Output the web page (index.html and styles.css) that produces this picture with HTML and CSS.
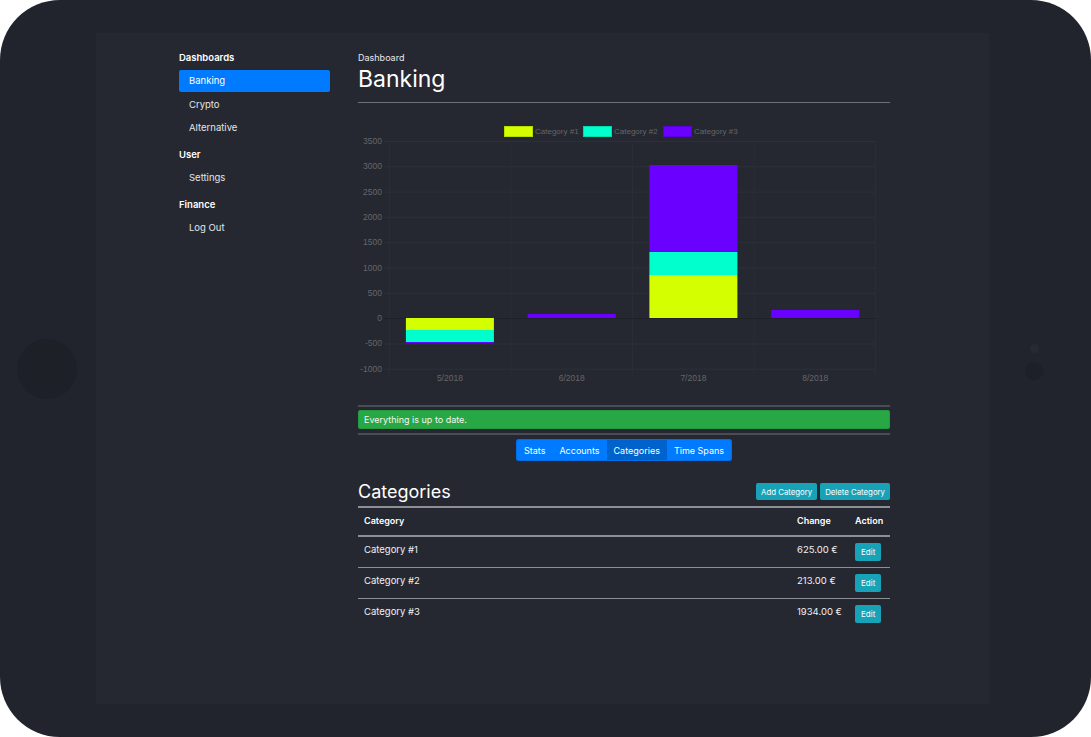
FILE: index.html
```html
<!DOCTYPE html>
<html>
<head>
<meta charset="utf-8">
<link rel="stylesheet" href="styles.css">
</head>
<body>
<div class="device">
  <div class="side-left"><div class="home-btn"></div></div>
  <div class="screen">
    <nav class="sidebar">
      <h6 class="nav-head first">Dashboards</h6>
      <a class="nav-item active">Banking</a>
      <a class="nav-item">Crypto</a>
      <a class="nav-item">Alternative</a>
      <h6 class="nav-head">User</h6>
      <a class="nav-item">Settings</a>
      <h6 class="nav-head">Finance</h6>
      <a class="nav-item">Log Out</a>
    </nav>
    <main class="main">
      <div class="crumb">Dashboard</div>
      <h1 class="title">Banking</h1>
      <div class="rule"></div>
      <svg class="chart" width="532" height="274" viewBox="0 0 532 274" font-family="Liberation Sans, Arial, sans-serif" font-size="8.5">
        <g fill="#d4ff00" stroke="#b8dc00" stroke-width="1"><rect x="146.5" y="8.5" width="28" height="10"/></g>
        <g fill="#00ffcc" stroke="#00d9ad"><rect x="225.5" y="8.5" width="28" height="10"/></g>
        <g fill="#6a00ff" stroke="#5a00dd"><rect x="305.5" y="8.5" width="28" height="10"/></g>
        <g fill="#666" font-size="8"><text x="177" y="16">Category #1</text><text x="256" y="16">Category #2</text><text x="336" y="16">Category #3</text></g>
        <g stroke="#2c3038" stroke-width="1">
          <line x1="26" y1="23.5" x2="518" y2="23.5"/>
          <line x1="26" y1="48.8" x2="518" y2="48.8"/>
          <line x1="26" y1="74.1" x2="518" y2="74.1"/>
          <line x1="26" y1="99.4" x2="518" y2="99.4"/>
          <line x1="26" y1="124.7" x2="518" y2="124.7"/>
          <line x1="26" y1="150" x2="518" y2="150"/>
          <line x1="26" y1="175.3" x2="518" y2="175.3"/>
          <line x1="26" y1="226" x2="518" y2="226"/>
          <line x1="26" y1="251.2" x2="518" y2="251.2"/>
        </g>
        <g stroke="#2a2d35" stroke-width="1">
          <line x1="31.5" y1="23" x2="31.5" y2="258"/>
          <line x1="153" y1="23" x2="153" y2="258"/>
          <line x1="274.5" y1="23" x2="274.5" y2="258"/>
          <line x1="396" y1="23" x2="396" y2="258"/>
          <line x1="517.5" y1="23" x2="517.5" y2="258"/>
        </g>
        <line x1="26" y1="200.5" x2="518" y2="200.5" stroke="#1d2027" stroke-width="1"/>
        <g fill="#666" text-anchor="end">
          <text x="24" y="26">3500</text>
          <text x="24" y="51.3">3000</text>
          <text x="24" y="76.6">2500</text>
          <text x="24" y="101.9">2000</text>
          <text x="24" y="127.2">1500</text>
          <text x="24" y="152.5">1000</text>
          <text x="24" y="177.8">500</text>
          <text x="24" y="203">0</text>
          <text x="24" y="228.4">-500</text>
          <text x="24" y="253.7">-1000</text>
        </g>
        <g>
          <rect x="47.9" y="200" width="88" height="12" fill="#d4ff00"/>
          <rect x="47.9" y="212" width="88" height="12" fill="#00ffcc"/>
          <rect x="47.9" y="224" width="88" height="1.2" fill="#6a00ff"/>
          <rect x="169.7" y="196" width="88" height="4" fill="#6a00ff"/>
          <rect x="291.4" y="157" width="88" height="43" fill="#d4ff00"/>
          <rect x="291.4" y="134" width="88" height="23" fill="#00ffcc"/>
          <rect x="291.4" y="47" width="88" height="87" fill="#6a00ff"/>
          <rect x="413.2" y="192" width="88" height="8" fill="#6a00ff"/>
        </g>
        <g fill="#666" text-anchor="middle">
          <text x="91.9" y="263">5/2018</text>
          <text x="213.7" y="263">6/2018</text>
          <text x="335.4" y="263">7/2018</text>
          <text x="457.2" y="263">8/2018</text>
        </g>
      </svg>
      <div class="sep"></div>
      <div class="alert">Everything is up to date.</div>
      <div class="sep"></div>
      <div class="tabs">
        <div class="btn-group">
          <button class="tab">Stats</button>
          <button class="tab">Accounts</button>
          <button class="tab active">Categories</button>
          <button class="tab">Time Spans</button>
        </div>
      </div>
      <div class="section-head">
        <h2 class="section-title">Categories</h2>
        <div class="actions">
          <button class="btn-info">Add Category</button>
          <button class="btn-info">Delete Category</button>
        </div>
      </div>
      <table class="table">
        <thead>
          <tr><th>Category</th><th class="col-change">Change</th><th class="col-action">Action</th></tr>
        </thead>
        <tbody>
          <tr><td>Category #1</td><td>625.00 €</td><td><button class="btn-edit">Edit</button></td></tr>
          <tr><td>Category #2</td><td>213.00 €</td><td><button class="btn-edit">Edit</button></td></tr>
          <tr><td>Category #3</td><td>1934.00 €</td><td><button class="btn-edit">Edit</button></td></tr>
        </tbody>
      </table>
    </main>
  </div>
  <div class="side-right">
    <div class="cam-dot"></div>
    <div class="cam-lens"></div>
  </div>
</div>
</body>
</html>
```

FILE: styles.css
```css
* { box-sizing: border-box; }
html, body { margin: 0; padding: 0; background: #ffffff; }
body { font-family: "Inter", "Roboto", sans-serif; color: #ffffff; }

.device {
  width: 1091px;
  height: 737px;
  background: #21242d;
  border-radius: 60px;
  display: flex;
  align-items: center;
}

.side-left {
  width: 96px;
  display: flex;
  justify-content: center;
  padding-right: 2px;
}
.home-btn {
  width: 60px;
  height: 60px;
  border-radius: 50%;
  background: #1d2027;
}

.side-right {
  flex: 1;
  display: flex;
  flex-direction: column;
  align-items: flex-start;
  padding-left: 36px;
  padding-bottom: 13px;
}
.cam-dot {
  width: 9px;
  height: 9px;
  border-radius: 50%;
  background: #272a32;
  margin-left: 4.5px;
}
.cam-lens {
  width: 18px;
  height: 18px;
  border-radius: 50%;
  background: #1d2027;
  margin-top: 9.5px;
}

.screen {
  width: 893px;
  height: 671px;
  background: #252831;
  display: flex;
  padding-left: 83px;
}

.sidebar {
  width: 151px;
  padding-top: 18px;
  display: flex;
  flex-direction: column;
}
.nav-head {
  margin: 7.5px 0 5px 0;
  font-size: 9.5px;
  line-height: 14px;
  font-weight: 600;
  color: #ffffff;
}
.nav-head.first { margin-top: 0; }
.nav-item {
  display: block;
  height: 22px;
  line-height: 22px;
  padding-left: 10px;
  font-size: 9.5px;
  color: #e4e5e8;
  border-radius: 2px;
  margin-bottom: 1.5px;
}
.nav-item.active {
  background: #007bff;
  color: #ffffff;
}

.main {
  width: 532px;
  margin-left: 28px;
  padding-top: 19px;
}
.crumb {
  font-size: 9px;
  line-height: 12px;
  color: #e8e9eb;
}
.title {
  margin: 1px 0 0 0;
  font-size: 23px;
  line-height: 28px;
  font-weight: 400;
  color: #ffffff;
}
.rule {
  height: 1px;
  background: #6d7079;
  margin-top: 9px;
}
.chart {
  display: block;
  margin-top: 15px;
}
.sep {
  height: 2px;
  background: #4a4d56;
}
.chart + .sep { margin-top: 13px; }
.alert {
  margin: 3px 0 4px 0;
  height: 19px;
  line-height: 17px;
  background: #28a745;
  border: 1px solid #239a3f;
  border-radius: 2px;
  padding-left: 5px;
  font-size: 9px;
  color: #f2f7f3;
}
.tabs {
  display: flex;
  justify-content: center;
  margin-top: 4px;
}
.btn-group {
  display: flex;
  border-radius: 2px;
  overflow: hidden;
  border: 1px solid #006ee6;
}
.tab {
  height: 20px;
  border: none;
  background: #007bff;
  color: #ffffff;
  font-family: "Inter", "Roboto", sans-serif;
  font-size: 9px;
  padding: 0 7px;
}
.tab.active { background: #0062cc; }

.section-head {
  display: flex;
  justify-content: space-between;
  align-items: flex-end;
  margin-top: 19px;
}
.section-title {
  margin: 0;
  font-size: 18px;
  line-height: 24px;
  font-weight: 400;
}
.actions {
  display: flex;
  gap: 3px;
  margin-bottom: 4px;
}
.btn-info {
  height: 17px;
  border: none;
  border-radius: 2px;
  background: #17a2b8;
  color: #ffffff;
  font-family: "Inter", "Roboto", sans-serif;
  font-size: 7.8px;
  padding: 0 5px;
}

.table {
  width: 100%;
  border-collapse: collapse;
  margin-top: 2px;
  border-top: 2px solid #8c8f96;
}
.table th {
  text-align: left;
  font-size: 9px;
  font-weight: 600;
  line-height: 14px;
  padding: 6px 6px 7px 6px;
  border-bottom: 2px solid #8c8f96;
}
.table td {
  font-size: 9.5px;
  line-height: 14px;
  padding: 6px 6px 6px 6px;
  vertical-align: top;
  border-top: 1px solid #8c8f96;
  color: #f0f0f2;
}
.table tbody tr:first-child td { border-top: none; }
.col-change { width: 58px; }
.col-action { width: 41px; }
.btn-edit {
  height: 18px;
  border: none;
  border-radius: 2px;
  background: #17a2b8;
  color: #ffffff;
  font-family: "Inter", "Roboto", sans-serif;
  font-size: 8px;
  padding: 0 6px;
  display: block;
}
```
